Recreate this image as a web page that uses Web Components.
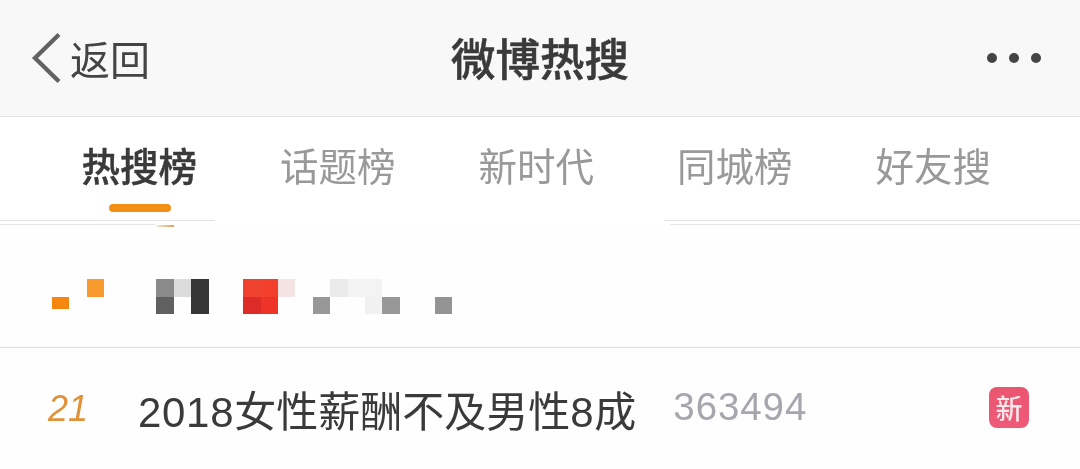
<!DOCTYPE html>
<html lang="zh"><head><meta charset="utf-8">
<style>
html,body{margin:0;padding:0;background:#fff}
body{width:1080px;height:469px;overflow:hidden;font-family:"Liberation Sans","Noto Sans CJK SC",sans-serif;filter:blur(.35px)}
.d{letter-spacing:.7px}
</style></head><body>
<hot-page>
<nav-bar></nav-bar>
<tab-bar></tab-bar>
<tab-divider></tab-divider>
<mosaic-row></mosaic-row>
<rank-row rank="21" count="363494" tag="新"><span class="d">2018</span>女性薪酬不及男性<span class="d">8</span>成</rank-row>
</hot-page>
<script>
function def(name,css,html,init){
  customElements.define(name,class extends HTMLElement{
    constructor(){super();const s=this.attachShadow({mode:"open"});s.innerHTML=`<style>${css}</style>${typeof html==="function"?html(this):html}`;}
    connectedCallback(){if(init)init(this,this.shadowRoot)}
  });
}
def("hot-page",":host{display:flex;flex-direction:column;width:1080px;height:469px;overflow:hidden}","<slot></slot>");
def("nav-bar",`:host{display:grid;grid-template-columns:1fr auto 1fr;align-items:center;height:116px;background:#f8f8f8;border-bottom:1px solid #e2e2e2;color:#3c3c3c}
.back{display:flex;align-items:center;padding-left:31px;gap:9px;font-size:40px;color:#444;font-weight:400}
.back svg{display:block}
.title{font-size:44.500px;font-weight:500;color:#3a3a3a;padding-bottom:4px;-webkit-text-stroke:.5px #3a3a3a}
.more{display:flex;justify-content:flex-end;gap:12px;padding-right:39px}
.more i{width:10px;height:10px;border-radius:50%;background:#444}`,
`<div class="back"><svg width="30" height="52" viewBox="0 0 30 52"><path d="M28 2.500 L4 26 L28 49.500" fill="none" stroke="#626262" stroke-width="4.300"/></svg><span>返回</span></div>
<div class="title">微博热搜</div>
<div class="more"><i></i><i></i><i></i></div>`);
def("tab-bar",`:host{display:grid;grid-template-columns:repeat(5,198.5px);padding-left:40px;height:103px;background:#fff;align-items:start}
.t{display:flex;flex-direction:column;align-items:center;font-size:38.500px;color:#999;line-height:56px;padding-top:23px}
.on{color:#3a3a3a;font-weight:500;-webkit-text-stroke:.4px #3a3a3a}
.on::after{content:"";width:62px;height:8px;margin:8px 0 0 1px;border-radius:4px;background:#f28f14;-webkit-text-stroke:0}`,
`<div class="t on">热搜榜</div><div class="t">话题榜</div><div class="t">新时代</div><div class="t">同城榜</div><div class="t">好友搜</div>`);
def("tab-divider",`:host{display:block;height:8px;background:
linear-gradient(90deg,#e4e4e4 0 215px,transparent 215px 664px,#e4e4e4 664px) 0 0/100% 1px no-repeat,
linear-gradient(90deg,#e6e6e6 0 155px,transparent 155px 670px,#e6e6e6 670px) 0 4px/100% 1px no-repeat,
linear-gradient(90deg,transparent 156px,#f3e3c8 158px,#d9a050 174px,transparent 174px) 0 5px/100% 2px no-repeat}`,"");
def("mosaic-row",`:host{display:grid;grid-template-columns:repeat(23,17.4px);grid-template-rows:17.5px 17.5px;padding:51px 0 33px 52px;height:35px;border-bottom:1px solid #dedede;background:#fefefe}
i{display:block}`,"",(el,s)=>{
  if(s.querySelector("i"))return;
  const cells=[[0,1,"#f7860f",.72],[2,0,"#f89a2e"],[6,0,"#8a8a8a"],[6,1,"#606060"],[7,0,"#dcdcdc"],[8,0,"#363636"],[8,1,"#363636"],
  [11,0,"#f0432f"],[12,0,"#f2402c"],[11,1,"#dc2c28"],[12,1,"#ee3328"],[13,0,"#f5e2e2"],[15,1,"#989898"],[16,0,"#ebebeb"],[17,0,"#f3f3f3"],[18,0,"#f3f3f3"],[18,1,"#f1f1f1"],[19,1,"#989898"],[22,1,"#949494"]];
  for(const [c,r,col,h] of cells){const i=document.createElement("i");i.style.cssText=`grid-column:${c+1};grid-row:${r+1};background:${col};${h?`height:${h*100}%;`:""}`;s.appendChild(i);}
});
def("rank-row",`:host{display:flex;align-items:center;height:121px;background:#fefefe;color:#3a3a3a}
.r{padding-left:48px;width:90px;font:italic 36px "Liberation Sans","Noto Sans CJK SC",sans-serif;color:#e0923a}
.x{font-size:42px;white-space:nowrap}
.c{font-size:38.500px;color:#a6a6ae;margin-left:37px;letter-spacing:.9px;padding-bottom:3px}
.g{margin-left:auto;margin-right:51px;width:40px;height:41px;border-radius:8px;background:linear-gradient(#ea5570,#ee5a78);color:#fde9ec;font-size:27px;font-weight:500;display:flex;align-items:center;justify-content:center;margin-bottom:3px}`,
el=>`<div class="r">${el.getAttribute("rank")}</div><div class="x"><slot></slot></div><div class="c">${el.getAttribute("count")}</div><div class="g">${el.getAttribute("tag")}</div>`);
</script>
</body></html>
